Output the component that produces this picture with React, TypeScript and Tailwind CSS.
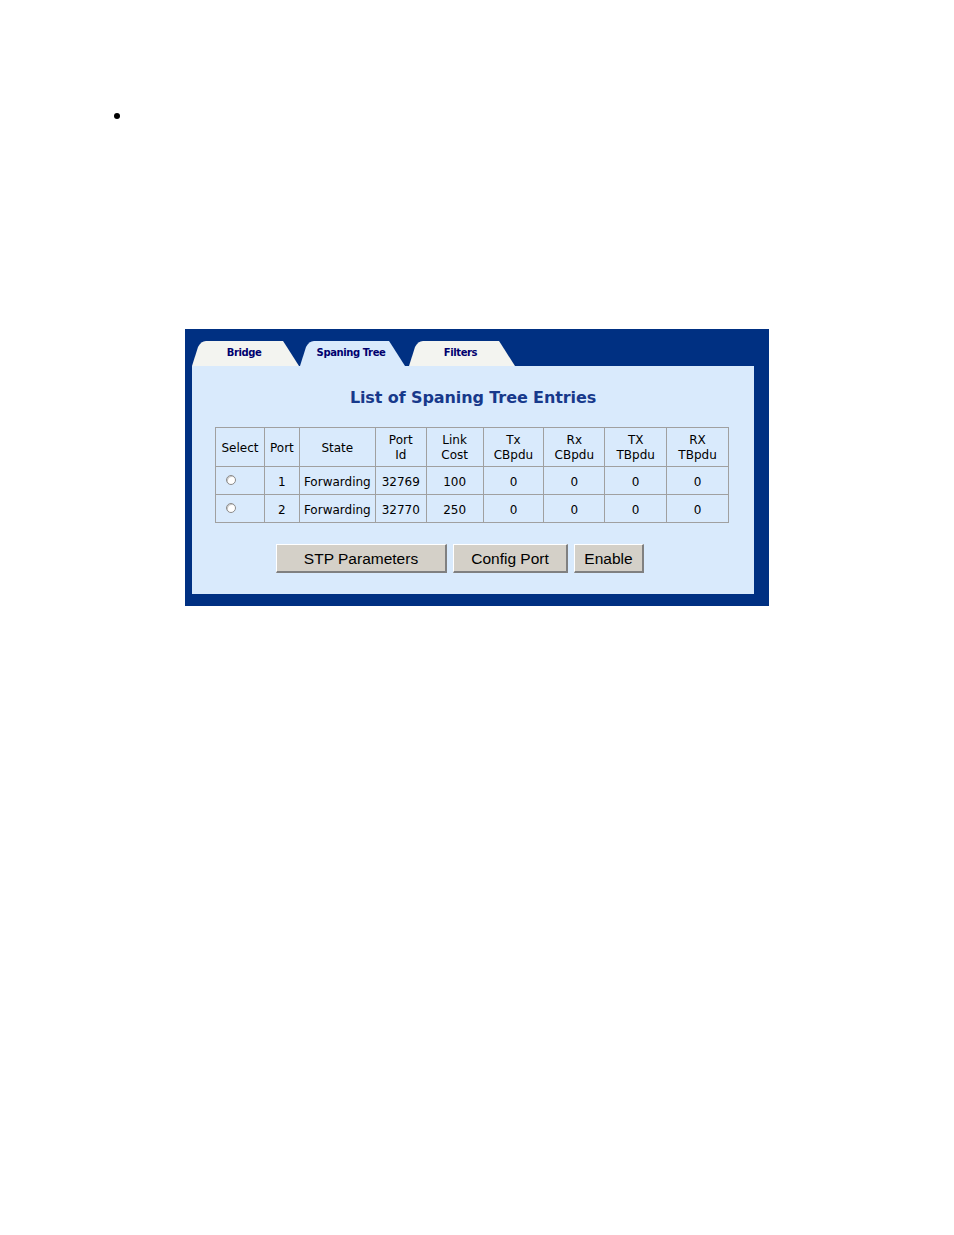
import React from "react";

const Tab = ({ label, active, w }: { label: string; active?: boolean; w: number }) => {
  const h = 25;
  const fill = active ? "#d9eafc" : "#f3f4f0";
  const d = `M0 ${h} L6 6 Q9 0 14 0 L${w - 16} 0 L${w - 14} 3 L${w} ${h} Z`;
  return (
    <div className="relative flex items-center justify-center" style={{ width: w, height: h }}>
      <svg className="absolute inset-0" width={w} height={h} viewBox={`0 0 ${w} ${h}`}>
        <path d={d} fill={fill} />
      </svg>
      <span
        className="relative text-[10px] font-bold text-[#00006e] tracking-[-0.4px] pr-[3px] pb-[2px]"
        style={{ fontFamily: '"DejaVu Sans", Verdana, sans-serif' }}
      >
        {label}
      </span>
    </div>
  );
};

const Radio = () => (
  <span className="inline-block w-[10px] h-[10px] rounded-full border border-[#8a8a8a] bg-white shadow-[inset_1px_1px_0_#c8c8c8]" />
);

const Btn = ({ label, w }: { label: string; w: number }) => (
  <div
    className="h-[29px] flex items-center justify-center pt-[1px] bg-[#d4d0c8] border-t border-l border-white border-r-2 border-b-2 border-r-[#808080] border-b-[#808080] text-[15.5px] text-black"
    style={{ width: w, fontFamily: '"Liberation Sans", Arial, sans-serif' }}
  >
    {label}
  </div>
);

const cols = [49, 35, 76, 51, 57, 61, 61, 62, 62];
const headers: React.ReactNode[] = [
  "Select",
  "Port",
  "State",
  <>Port<br />Id</>,
  <>Link<br />Cost</>,
  <>Tx<br />CBpdu</>,
  <>Rx<br />CBpdu</>,
  <>TX<br />TBpdu</>,
  <>RX<br />TBpdu</>,
];
const rows = [
  ["1", "Forwarding", "32769", "100", "0", "0", "0", "0"],
  ["2", "Forwarding", "32770", "250", "0", "0", "0", "0"],
];

export default function App() {
  return (
    <div className="w-[954px] h-[1235px] bg-white relative" style={{ fontFamily: '"DejaVu Sans", Verdana, sans-serif' }}>
      <div className="pt-[113px] pl-[114px]">
        <span className="block w-[6px] h-[6px] rounded-full bg-black" />
      </div>
      <div className="ml-[185px] mt-[210px] w-[584px] bg-[#003082] pt-[12px] pl-[7px] pr-[15px] pb-[12px]">
        <div className="flex items-end h-[25px]">
          <Tab label="Bridge" w={107} />
          <div className="w-[1px]" />
          <Tab label="Spaning Tree" active w={105} />
          <div className="w-[4px]" />
          <Tab label="Filters" w={106} />
        </div>
        <div className="bg-[#d9eafc] h-[228px] flex flex-col">
          <div className="h-[61px] flex items-center justify-center pt-[3px]">
            <span className="text-[16px] font-bold text-[#17398b] tracking-[-0.1px]">List of Spaning Tree Entries</span>
          </div>
          <div className="pl-[23px]">
            <table className="border-collapse border border-[#8c8c8c] text-[12px] text-black" style={{ width: 514 }}>
              <colgroup>
                {cols.map((c, i) => (
                  <col key={i} style={{ width: c }} />
                ))}
              </colgroup>
              <tbody>
                <tr className="h-[39px]">
                  {headers.map((h, i) => (
                    <td key={i} className="border border-[#a0a0a0] text-center align-middle leading-[15px] p-0 pt-[2px]">
                      {h}
                    </td>
                  ))}
                </tr>
                {rows.map((r, ri) => (
                  <tr key={ri} className="h-[28px]">
                    <td className="border border-[#a0a0a0] align-middle pl-[10px] pt-[1px] p-0 leading-none">
                      <Radio />
                    </td>
                    {r.map((v, i) => (
                      <td key={i} className="border border-[#a0a0a0] text-center align-middle p-0 pt-[2px]">
                        {v}
                      </td>
                    ))}
                  </tr>
                ))}
              </tbody>
            </table>
          </div>
          <div className="flex gap-[6px] pl-[84px] mt-[21px]">
            <Btn label="STP Parameters" w={171} />
            <Btn label="Config Port" w={115} />
            <Btn label="Enable" w={70} />
          </div>
        </div>
      </div>
    </div>
  );
}
